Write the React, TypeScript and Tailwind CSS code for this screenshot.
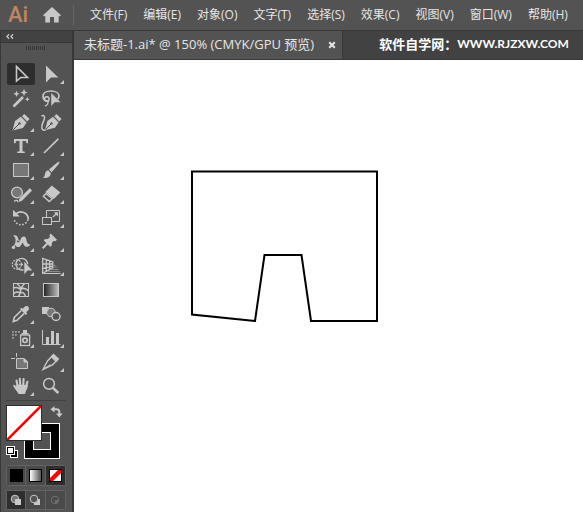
import type { ReactNode } from "react";

type Tool = {
  name: string;
  icon: ReactNode;
  more?: boolean;
};

const MENUS = [
  "文件(F)",
  "编辑(E)",
  "对象(O)",
  "文字(T)",
  "选择(S)",
  "效果(C)",
  "视图(V)",
  "窗口(W)",
  "帮助(H)",
];

const LINE = "#c8c8c8";
const SHADE = "#777777";
const PANEL = "#535353";

// Icons are drawn on a 30x24 grid, two per row
const TOOLS: Tool[] = [
  {
    name: "选择工具",
    icon: <path d="M10.5 4.5V19L14.8 15.5H21.5Z" fill="none" stroke={LINE} strokeWidth="1.6" />,
  },
  {
    name: "直接选择工具",
    more: true,
    icon: <path d="M10 3.5V20.5L15 15.5H22.3Z" fill={LINE} />,
  },
  {
    name: "魔棒工具",
    icon: (
      <>
        <path d="M7.5 20.5L17 11" stroke={LINE} strokeWidth="2.6" />
        <path d="M18 2.8l1 2.7 2.8.9-2.8 1-1 2.8-1-2.8-2.7-1 2.7-.9z" fill={LINE} />
        <path d="M10.5 4.6l.9 2.3 2.3.9-2.3.9-.9 2.3-.9-2.3-2.3-.9 2.3-.9z" fill={LINE} />
        <path d="M21.3 10.8l.7 1.7 1.7.7-1.7.7-.7 1.7-.7-1.7-1.7-.7 1.7-.7z" fill={LINE} />
      </>
    ),
  },
  {
    name: "套索工具",
    icon: (
      <>
        <path
          d="M12.5 15.3C9 15 7 12.8 7 10.3C7 7 10.5 5 15 5C19.5 5 23 7 23 10C23 12 22 13 20.5 14"
          fill="none"
          stroke={LINE}
          strokeWidth="1.7"
        />
        <circle cx="10.8" cy="13" r="2.3" fill="none" stroke={LINE} strokeWidth="1.4" />
        <path d="M12 14.5C12.5 17 12 19 9 20" fill="none" stroke={LINE} strokeWidth="1.4" />
        <path d="M15 6.5V20.5L18.7 16.5H25Z" fill={LINE} stroke={PANEL} strokeWidth=".5" />
      </>
    ),
  },
  {
    name: "钢笔工具",
    more: true,
    icon: (
      <>
        <path d="M6.5 20.5L9 11L14.8 6.8L20.6 12.4L17 18Z" fill={LINE} />
        <path d="M16 6.2L18.3 4L23.6 9L21.2 11.4Z" fill={LINE} />
        <path d="M7 20L13 14" stroke={PANEL} />
        <circle cx="13.5" cy="13.4" r="1.2" fill={PANEL} />
      </>
    ),
  },
  {
    name: "曲率工具",
    icon: (
      <>
        <path d="M9 20.3L11.4 11L17 6.8L22.6 12.4L19 17.8Z" fill={LINE} />
        <path d="M18.2 6.2L20.5 4L25.6 9L23.2 11.4Z" fill={LINE} />
        <path d="M9.5 19.7L15 14" stroke={PANEL} />
        <circle cx="15.5" cy="13.4" r="1.2" fill={PANEL} />
        <path
          d="M5.5 6C8 4.5 9.5 6.5 8 10C6.5 13.5 4.5 17.5 6.5 19.5C7.3 20.3 8.5 20.3 9.5 20"
          fill="none"
          stroke={LINE}
          strokeWidth="1.5"
        />
      </>
    ),
  },
  {
    name: "文字工具",
    more: true,
    icon: (
      <path d="M8 5H22V9.3H20.6L19.8 6.9H16.5V17.2L18.8 17.8V19H11.2V17.8L13.5 17.2V6.9H10.2L9.4 9.3H8Z" fill={LINE} />
    ),
  },
  {
    name: "直线段工具",
    more: true,
    icon: <path d="M8 19L22.3 4.8" stroke={LINE} strokeWidth="1.7" />,
  },
  {
    name: "矩形工具",
    more: true,
    icon: <rect x="7.5" y="5.5" width="15" height="13" fill={SHADE} stroke={LINE} />,
  },
  {
    name: "画笔工具",
    more: true,
    icon: (
      <>
        <path d="M23.5 3.6L21.5 4.2L13 11.5L15.6 14.2L22.8 6Z" fill={LINE} />
        <path d="M12.2 12.3L14.8 15C14.8 19 11 20.6 7 19.8C9 18.8 8.5 17 9.3 14.8C9.9 13.2 11 12.4 12.2 12.3Z" fill={LINE} />
      </>
    ),
  },
  {
    name: "Shaper 工具",
    more: true,
    icon: (
      <>
        <circle cx="11" cy="10.5" r="5.4" fill={SHADE} stroke={LINE} strokeWidth="1.3" />
        <path d="M8 19.5C10.5 17.5 12 18.5 11.5 20" fill="none" stroke={LINE} strokeWidth="1.2" />
        <path d="M12 20.5L13.3 16.3L23.7 6L26.3 8.5L16 19Z" fill={LINE} stroke={PANEL} strokeWidth=".5" />
      </>
    ),
  },
  {
    name: "橡皮擦工具",
    more: true,
    icon: (
      <>
        <path d="M15.8 3.5L24.3 10.5L17.8 17L9.4 10Z" fill={LINE} />
        <path d="M10 11.5L7.3 14.2L13.3 19.5L16.3 16.7Z" fill="none" stroke={LINE} strokeWidth="1.4" />
      </>
    ),
  },
  {
    name: "旋转工具",
    more: true,
    icon: (
      <>
        <path d="M9.5 8.5A7.2 7.2 0 0 1 22.2 13.5" fill="none" stroke={LINE} strokeWidth="1.7" />
        <path d="M22 13.5A7.2 7.2 0 0 1 8.3 14" fill="none" stroke={LINE} strokeWidth="1.7" strokeDasharray="1.6 1.6" />
        <path d="M7 3.8V10.5H13.8Z" fill={LINE} />
      </>
    ),
  },
  {
    name: "比例缩放工具",
    more: true,
    icon: (
      <>
        <path d="M10.5 11.5V4.5H23.5V15.5H15.5" fill="none" stroke={LINE} />
        <rect x="6.5" y="11.5" width="9" height="7" fill="none" stroke={LINE} />
        <path d="M17 11L20 8" stroke={LINE} strokeWidth="1.3" />
        <path d="M17.8 6.3H22V10.5Z" fill={LINE} />
      </>
    ),
  },
  {
    name: "宽度工具",
    more: true,
    icon: (
      <>
        <path
          d="M7.2 5.6C11 4.2 12.6 7.6 12.4 11C12.4 13.5 14 12.5 14.6 9.5C15.3 6.4 19 5.4 20 8.4C21 11.5 21 14.5 24.3 14.2C22.5 18 18.5 17.5 17.4 14C16.6 11 16.2 14.5 14 16.4C11 18.5 8.6 15.5 9.4 12C10 9.5 9.5 7.5 7.2 5.6Z"
          fill={LINE}
        />
        <path d="M7 17.8L11.5 11" stroke={LINE} strokeWidth="1.3" />
        <circle cx="7.5" cy="17.4" r="1.7" fill={LINE} />
        <circle cx="12" cy="11.4" r="1.5" fill={PANEL} stroke={LINE} />
      </>
    ),
  },
  {
    name: "操控变形工具",
    more: true,
    icon: (
      <>
        <path d="M14.7 3.6L21 9.8L19.3 11.2L17.8 10.8L15.8 13L15.6 16L14.2 16.8L7.8 10.5L8.6 9.2L11.8 9L14 7L13.4 5.2Z" fill={LINE} />
        <path d="M11.5 13.3L6.7 18.2" stroke={LINE} strokeWidth="2" />
      </>
    ),
  },
  {
    name: "形状生成器工具",
    more: true,
    icon: (
      <>
        <path d="M17.5 16H15.5A5.8 5.8 0 1 1 21.6 10.2" fill="none" stroke={LINE} strokeWidth="1.4" />
        <circle cx="10.8" cy="10.5" r="4.6" fill="none" stroke={LINE} strokeWidth="1.1" strokeDasharray="2 .9" />
        <path d="M8.5 10.5H18" stroke={LINE} strokeWidth="1.3" strokeDasharray="1.3 1.1" />
        <path d="M18.3 7.8V20.3L21.4 16.5H26.3Z" fill={LINE} />
      </>
    ),
  },
  {
    name: "透视网格工具",
    more: true,
    icon: (
      <>
        <path
          d="M6.7 4.5V19.2L16.8 13.8V8Z M10.3 6V17.5 M13.6 7V15.8 M6.7 9.8L16.8 10 M6.7 14.6L16.8 12"
          fill="none"
          stroke={LINE}
          strokeWidth="1.3"
        />
        <path d="M17.5 9L21.5 13.5H17.5Z" fill={SHADE} />
        <path d="M15 15.5H22.5 M12 17.5H24" stroke="#8a8a8a" />
        <path d="M7.5 19.5H24.5" stroke={LINE} />
      </>
    ),
  },
  {
    name: "网格工具",
    icon: (
      <>
        <rect x="7.5" y="5.5" width="15" height="13" fill="none" stroke={LINE} />
        <path
          d="M11 5.5C15.5 9 15.5 14 12.5 18.5 M18.5 5.5C16.5 7.5 16.5 8.5 15 10.5 M7.5 10C10.5 9 12.5 9.5 14.5 11.5C17 9.5 20 10.5 22.5 13 M7.5 16C9.5 13.5 12 13.5 13.8 15C16.5 13.5 18.5 15 19.5 18.5"
          fill="none"
          stroke={LINE}
          strokeWidth="1.5"
        />
      </>
    ),
  },
  {
    name: "渐变工具",
    icon: (
      <>
        <defs>
          <linearGradient id="ramp">
            <stop offset="0" stopColor="#222222" />
            <stop offset="1" stopColor="#c0c0c0" />
          </linearGradient>
        </defs>
        <rect x="7.5" y="5.5" width="15" height="13" fill="url(#ramp)" stroke={LINE} />
      </>
    ),
  },
  {
    name: "吸管工具",
    more: true,
    icon: (
      <>
        <path d="M15.3 8.5L8.3 15.5L7.3 19.5L11 18.3L18.3 11.3" fill="none" stroke={LINE} strokeWidth="1.6" />
        <path d="M14 7L15.3 5.8L16.8 6.8L19.3 4.3C21.5 3.2 23.8 5.5 22.7 7.7L20.2 10.2L21.2 11.7L20 13Z" fill={LINE} />
      </>
    ),
  },
  {
    name: "混合工具",
    icon: (
      <>
        <rect x="6" y="5" width="7" height="7" fill={LINE} />
        <circle cx="15" cy="10.5" r="4.3" fill={SHADE} stroke={LINE} />
        <circle cx="20" cy="14.5" r="4" fill={PANEL} stroke={LINE} strokeWidth="1.4" />
      </>
    ),
  },
  {
    name: "符号喷枪工具",
    more: true,
    icon: (
      <>
        <path
          d="M6 5h1.8v1.8H6z M9 5h1.8v1.8H9z M12 5h1.8v1.8H12z M6 8h1.8v1.8H6z M9 8h1.8v1.8H9z M6 11h1.8v1.8H6z"
          fill="#a0a0a0"
        />
        <path d="M17 4h4v3h-4z M15.5 7h7v1.5h-7z" fill={LINE} />
        <rect x="14.6" y="9" width="9" height="10.5" fill="none" stroke={LINE} strokeWidth="1.3" />
        <circle cx="19" cy="14.3" r="2.2" fill="none" stroke={LINE} strokeWidth="1.7" />
      </>
    ),
  },
  {
    name: "柱形图工具",
    more: true,
    icon: (
      <>
        <path d="M6.5 4V18.5H24.5" fill="none" stroke={LINE} />
        <path d="M10 11h3v7h-3z M15 5h3v13h-3z M20 7h3v11h-3z" fill={LINE} />
      </>
    ),
  },
  {
    name: "画板工具",
    icon: (
      <>
        <path d="M5 8.5H9 M10.5 3V7" stroke={LINE} />
        <path d="M10.5 8.5H18L21.5 12V18.5H10.5Z" fill={SHADE} stroke={LINE} />
        <path d="M18 8.5V12H21.5Z" fill={LINE} stroke={LINE} />
      </>
    ),
  },
  {
    name: "切片工具",
    more: true,
    icon: (
      <>
        <path d="M7 19.5L11.5 11L15.5 6.8L20 11.3L16.5 14.8Z" fill="none" stroke={LINE} strokeWidth="1.4" />
        <path d="M7 19.5L14.5 14.5" stroke={LINE} />
        <path d="M14.8 6.3L17.5 3.5L23.3 9L20.6 12Z" fill={LINE} />
      </>
    ),
  },
  {
    name: "抓手工具",
    more: true,
    icon: (
      <>
        <path d="M10.3 12.5C8.5 10 7.5 10.5 7 11.2C8.2 13.5 9.3 15.5 11 17.5L12.5 20H19C19.5 17 21.5 15 21.8 12V11L10.3 10.5Z" fill={LINE} />
        <path
          d="M11.8 13L10.5 6.5 M14.3 12L13.8 4.8 M17.2 12L17.6 5 M20 13L21.4 7.8"
          stroke={LINE}
          strokeWidth="2.1"
          strokeLinecap="round"
        />
      </>
    ),
  },
  {
    name: "缩放工具",
    icon: (
      <>
        <circle cx="13" cy="9.8" r="5.4" fill="none" stroke={LINE} strokeWidth="1.5" />
        <path d="M17 13.8L22.3 19" stroke={LINE} strokeWidth="2.5" />
      </>
    ),
  },
];

function ToolButton({ tool, active }: { tool: Tool; active: boolean }) {
  return (
    <button
      type="button"
      aria-label={tool.name}
      aria-pressed={active}
      className={
        active
          ? "m-px h-[22px] rounded-xs bg-[#2e2e2e]"
          : "m-px h-[22px] rounded-xs hover:bg-[#484848]"
      }
    >
      <svg viewBox="1 1 28 22" className="h-[22px] w-7">
        {tool.icon}
        {tool.more && <path d="M28 18V22H24Z" fill={LINE} />}
      </svg>
    </button>
  );
}

function FillStroke() {
  return (
    <div className="relative ml-[5px] mt-1 h-[54px] w-[60px]">
      {/* stroke swatch */}
      <button
        type="button"
        aria-label="描边"
        className="absolute right-1.5 bottom-0 size-9 border border-white bg-black p-2"
      >
        <span className="block size-full border border-white bg-[#535353]" />
      </button>
      {/* fill swatch */}
      <button
        type="button"
        aria-label="填色"
        className="absolute left-0 top-0 size-9 border border-[#2e2e2e] bg-white"
      >
        <svg viewBox="0 0 34 34" className="size-full">
          <path d="M0 34L34 0" stroke="#ff0000" strokeWidth="2.6" />
        </svg>
      </button>
      <button type="button" aria-label="互换填色和描边" className="absolute right-[3px] top-px">
        <svg viewBox="0 0 13 12" className="h-3 w-[13px]">
          <path d="M3.5 3.3H6.5Q9.3 3.3 9.3 6V8.5" fill="none" stroke={LINE} strokeWidth="2" />
          <path d="M4.5 0V6.6L0.5 3.3Z M6 7.5H12.6L9.3 11.6Z" fill={LINE} />
        </svg>
      </button>
      <button type="button" aria-label="默认填色和描边" className="absolute bottom-px left-0">
        <svg viewBox="0 0 12 12" className="size-3">
          <rect x="4.5" y="4.5" width="7" height="7" fill="#000" stroke="#fff" />
          <rect x="7" y="7" width="2" height="2" fill="#fff" />
          <rect x="1.5" y="1.5" width="6" height="6" fill="#fff" stroke="#000" />
          <rect x=".5" y=".5" width="8" height="8" fill="none" stroke="#fff" />
        </svg>
      </button>
    </div>
  );
}

function ColorModes() {
  return (
    <div className="ml-[5px] mt-1.5 grid h-[21px] w-[60px] grid-cols-3 divide-x divide-[#636363] rounded-xs border border-[#636363]">
      <button type="button" aria-label="颜色" className="flex items-center justify-center bg-[#4a4a4a]">
        <span className="size-[13px] bg-black" />
      </button>
      <button type="button" aria-label="渐变" className="flex items-center justify-center bg-[#4a4a4a]">
        <span className="size-[13px] border border-black bg-linear-to-r from-white to-[#555555]" />
      </button>
      <button type="button" aria-label="无" className="flex items-center justify-center bg-[#2e2e2e]">
        <svg viewBox="0 0 13 13" className="size-[13px]">
          <rect x=".5" y=".5" width="12" height="12" fill="#fff" stroke="#000" />
          <path d="M1 9V12H4L12 4V1H9Z" fill="#f00" />
        </svg>
      </button>
    </div>
  );
}

function DrawModes() {
  return (
    <div className="ml-[5px] mt-1 grid h-5 w-[60px] grid-cols-3 divide-x divide-[#636363] rounded-xs border border-[#636363]">
      <button type="button" aria-label="正常绘图" className="flex items-center justify-center bg-[#2e2e2e]">
        <svg viewBox="0 0 12 12" className="size-3">
          <circle cx="5" cy="5" r="3.8" fill={SHADE} stroke={LINE} />
          <rect x="5" y="5" width="6" height="6" fill={LINE} />
        </svg>
      </button>
      <button type="button" aria-label="背面绘图" className="flex items-center justify-center bg-[#4a4a4a]">
        <svg viewBox="0 0 12 12" className="size-3">
          <rect x="5" y="5" width="6" height="6" fill={LINE} />
          <circle cx="5" cy="5" r="3.8" fill={PANEL} stroke={LINE} />
        </svg>
      </button>
      <button type="button" aria-label="内部绘图" disabled className="flex items-center justify-center bg-[#4a4a4a]">
        <svg viewBox="0 0 12 12" className="size-3">
          <circle cx="6" cy="6" r="3.8" fill="none" stroke="#6e6e6e" />
          <path d="M6 6H9.5A3.5 3.5 0 0 1 6 9.5Z" fill="#6e6e6e" />
        </svg>
      </button>
    </div>
  );
}

export default function App() {
  return (
    <div className="flex min-h-screen flex-col bg-[#535353] font-['Open_Sans','Noto_Sans_CJK_SC',sans-serif] text-[#e6e6e6]">
      {/* Menu bar */}
      <header className="flex h-[30px] items-center overflow-hidden whitespace-nowrap">
        <span className="ml-2 w-5 font-['Roboto',sans-serif] text-[22px] font-medium leading-7 text-[#c08560]">
          Ai
        </span>
        <button type="button" aria-label="主页" className="ml-[15px]">
          <svg viewBox="0 0 18 16" className="h-4 w-[18px]">
            <path d="M9 0L18 8.3L16.8 9.6L15.7 8.8V15.5H11V10H7V15.5H2.3V8.8L1.2 9.6L0 8.3Z" fill={LINE} />
          </svg>
        </button>
        <span className="ml-3 h-5 w-px bg-[#666666]" />
        <nav className="ml-4 flex gap-4 text-xs">
          {MENUS.map((label) => (
            <button key={label} type="button">
              {label}
            </button>
          ))}
        </nav>
      </header>

      <div className="flex flex-1 border-t border-[#383838]">
        {/* Tool panel */}
        <aside className="w-[74px] shrink-0 border-l border-r-2 border-[#383838]">
          <div className="flex h-3 items-center border-b border-[#383838] bg-[#424242] pl-[5px]">
            <button type="button" aria-label="折叠面板">
              <svg viewBox="0 0 8 5" className="h-[5px] w-2">
                <path d="M3 .3L1 2.5L3 4.7 M7 .3L5 2.5L7 4.7" fill="none" stroke="#d0d0d0" strokeWidth="1.3" />
              </svg>
            </button>
          </div>
          <div className="flex h-[19px] pl-[25px] pt-[3px]">
            <span className="h-1 w-[19px] bg-[repeating-linear-gradient(90deg,#383838_0_1px,#535353_1px_2px)]" />
          </div>
          <div className="ml-[5px] grid w-[60px] grid-cols-2">
            {TOOLS.map((tool, i) => (
              <ToolButton key={tool.name} tool={tool} active={i === 0} />
            ))}
          </div>
          <div className="ml-[5px] mt-0.5 h-px w-[60px] bg-[#424242]" />
          <FillStroke />
          <ColorModes />
          <DrawModes />
        </aside>

        {/* Document */}
        <main className="flex min-w-0 flex-1 flex-col">
          <div className="flex h-[29px] items-stretch overflow-hidden whitespace-nowrap border-b border-[#383838] bg-[#424242]">
            <div className="flex items-center border-r border-[#383838] bg-[#535353] pl-2.5 pr-1.5">
              <span className="text-[13px]">未标题-1.ai* @ 150% (CMYK/GPU 预览)</span>
              <button type="button" aria-label="关闭" className="ml-3.5">
                <svg viewBox="0 0 8 8" className="size-2">
                  <path d="M1.2 1.2L6.8 6.8 M6.8 1.2L1.2 6.8" stroke="#e6e6e6" strokeWidth="2" />
                </svg>
              </button>
            </div>
            <p className="ml-9 flex items-center pb-0.5 font-['Lato','Noto_Sans_CJK_SC',sans-serif] font-bold leading-5 text-white">
              <span className="text-[13px]">软件自学网：</span>
              <span className="text-xs">WWW.RJZXW.COM</span>
            </p>
          </div>
          <div className="flex-1 bg-white">
            <svg viewBox="0 0 188 152" className="ml-[117px] mt-[110px] h-[152px] w-[188px]">
              <path
                d="M1 1.5H186V151H120L110.5 85H73.5L64 151L1 144.5Z"
                fill="none"
                stroke="#000"
                strokeWidth="2"
              />
            </svg>
          </div>
        </main>
      </div>
    </div>
  );
}
